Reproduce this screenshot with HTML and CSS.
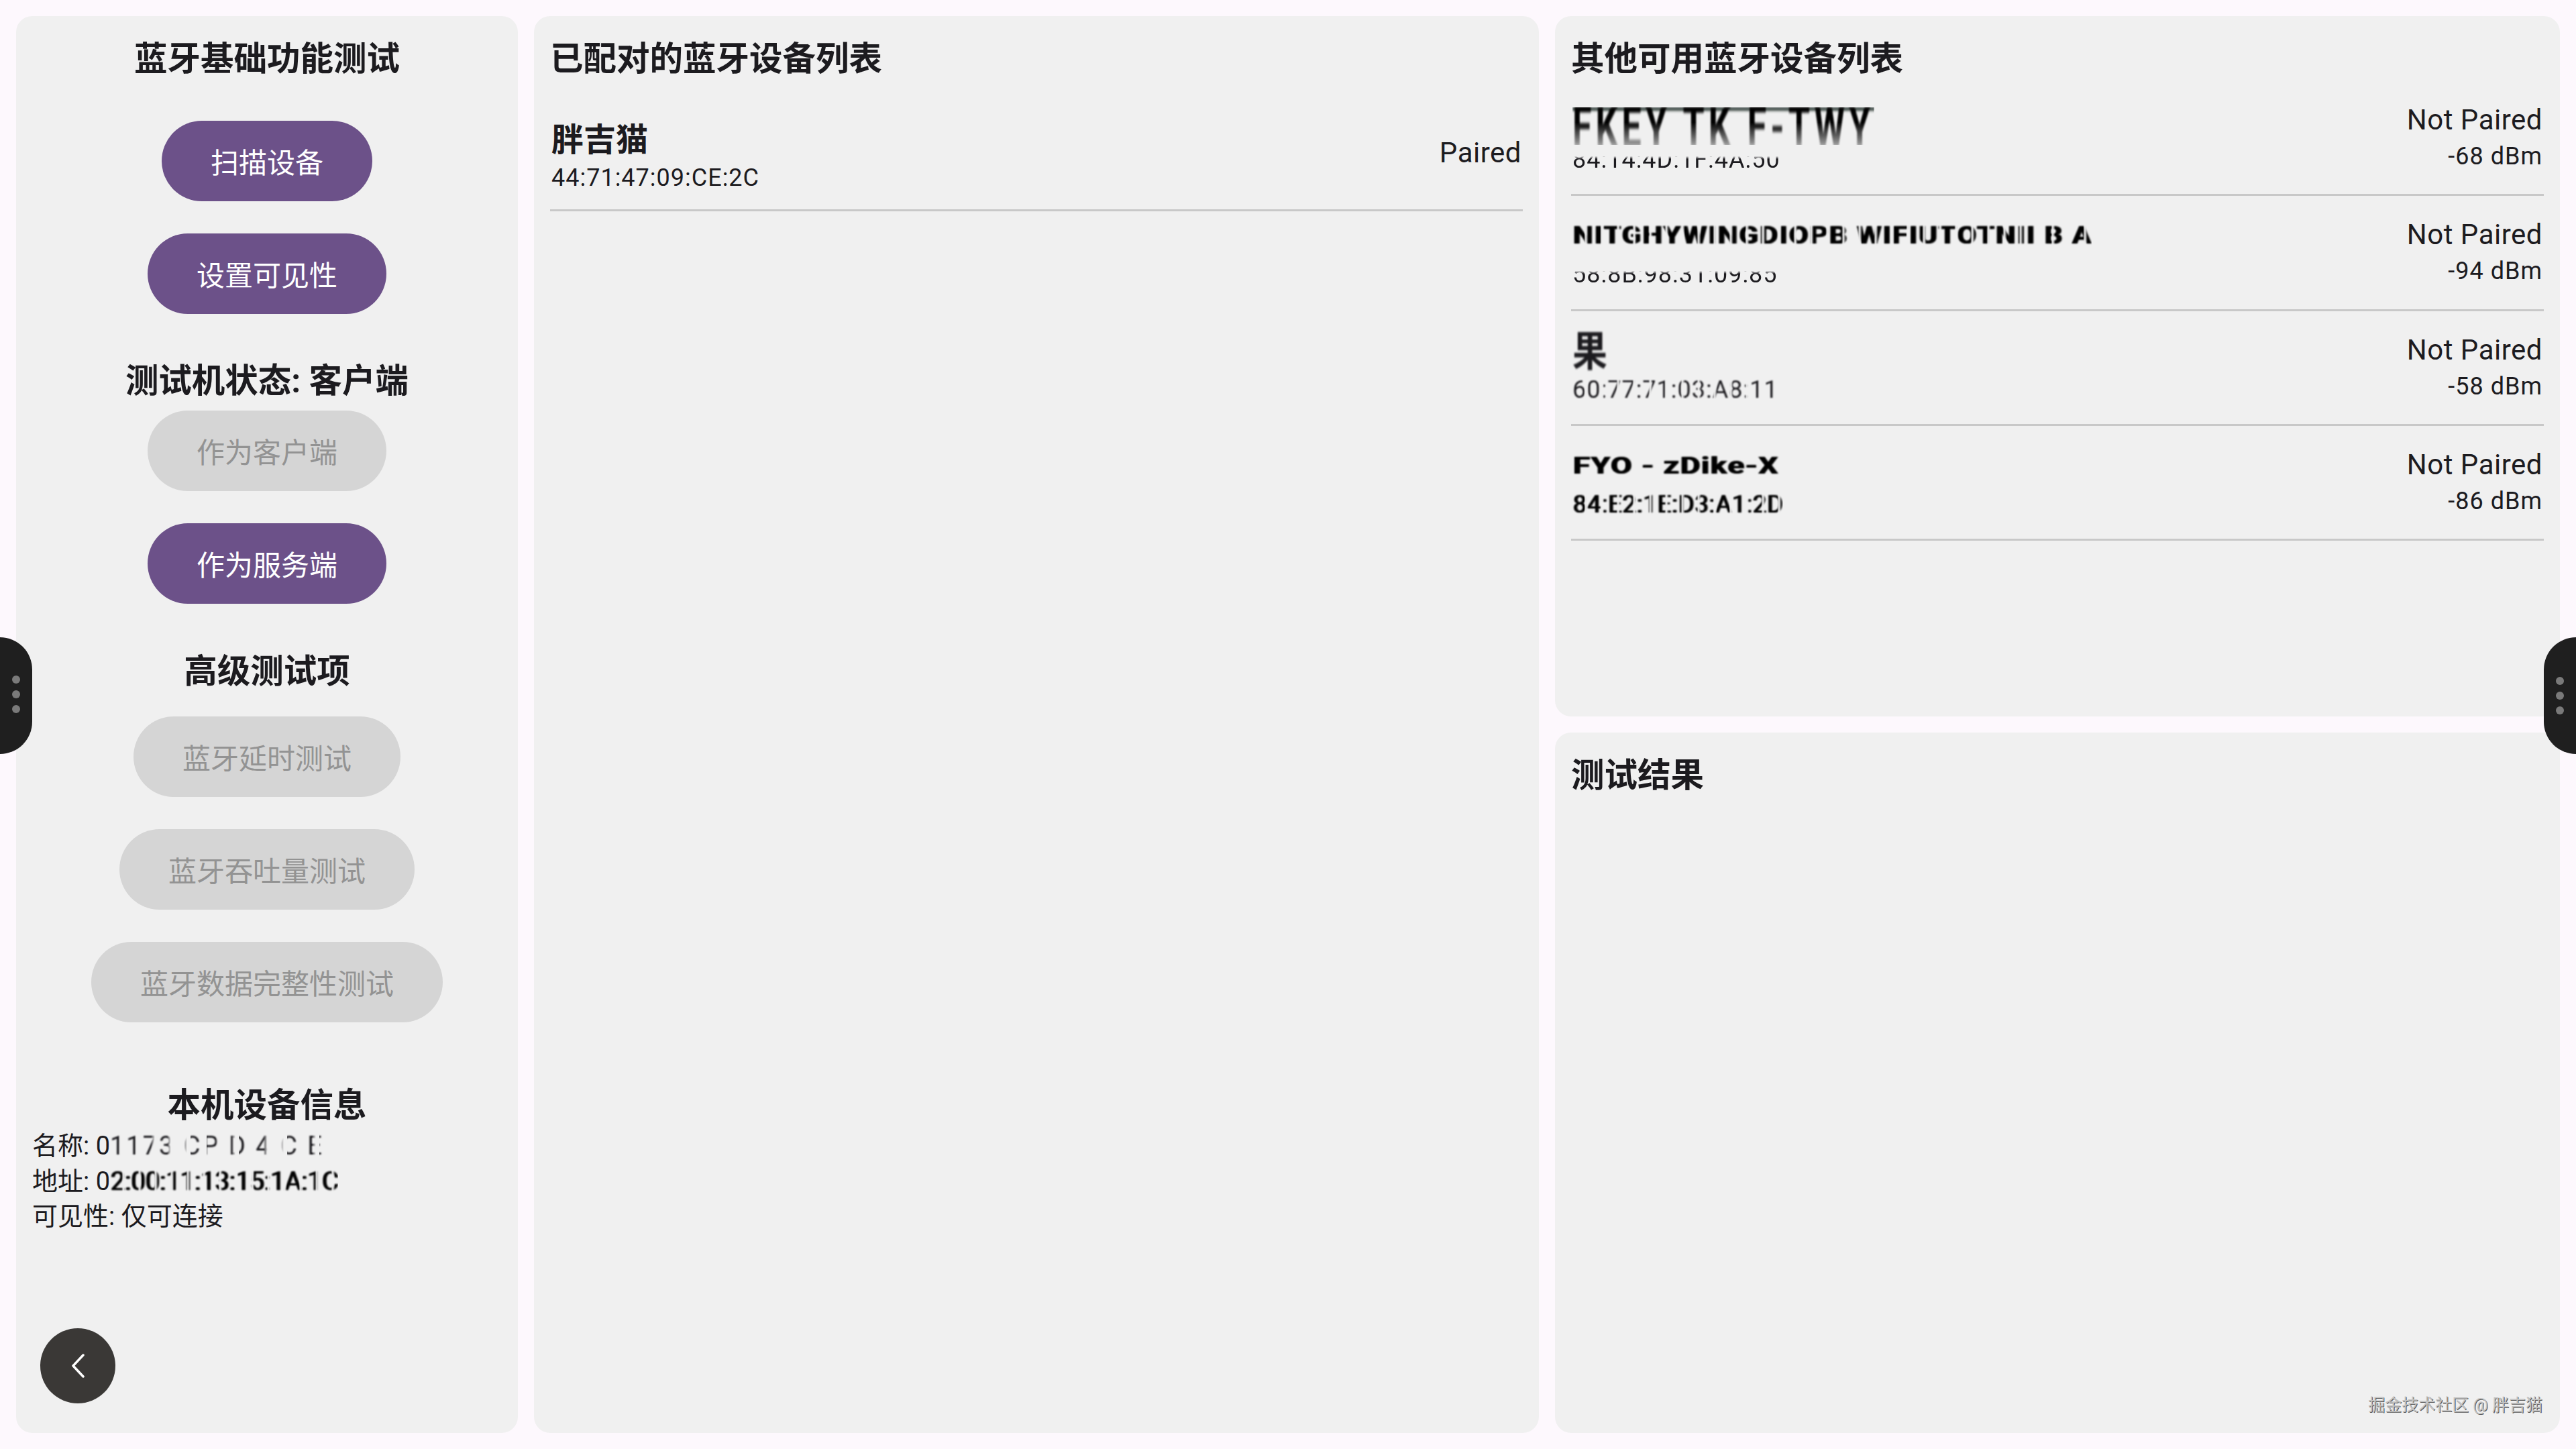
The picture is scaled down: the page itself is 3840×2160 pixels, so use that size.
FILE: index.html
```html
<!DOCTYPE html>
<html lang="zh-CN">
<head>
  <meta charset="UTF-8">
  <title>蓝牙测试</title>
  <link rel="stylesheet" href="styles.css">
</head>
<body>
  <div class="MainFrame">
    <div class="card sideCard">
      <h2 class="title">蓝牙基础功能测试</h2>
      <button class="btn first">扫描设备</button>
      <button class="btn">设置可见性</button>
      <h2 class="title stateTitle">测试机状态: 客户端</h2>
      <button class="btn off tight">作为客户端</button>
      <button class="btn">作为服务端</button>
      <h2 class="title advTitle">高级测试项</h2>
      <button class="btn off advFirst">蓝牙延时测试</button>
      <button class="btn off">蓝牙吞吐量测试</button>
      <button class="btn off">蓝牙数据完整性测试</button>
      <h2 class="title infoTitle">本机设备信息</h2>
      <div class="info">
        <p>名称: 0<span class="smudge gaps wide">1173 CP D 4 C E</span></p>
        <p>地址: 0<span class="smudge tightGaps heavy">2:00:11:13:15:1A:1C</span></p>
        <p>可见性: 仅可连接</p>
      </div>
      <div class="backBtn">
        <svg viewBox="0 0 24 40" width="24" height="40"><path d="M20 4 L5 20 L20 36" fill="none" stroke="#fff" stroke-width="3.5" stroke-linecap="round" stroke-linejoin="round"/></svg>
      </div>
    </div>

    <div class="card midCard">
      <h2 class="title">已配对的蓝牙设备列表</h2>
      <ul class="list pairedList">
        <li class="row">
          <div>
            <div class="name">胖吉猫</div>
            <div class="mac">44:71:47:09:CE:2C</div>
          </div>
          <div class="state">Paired</div>
        </li>
      </ul>
    </div>

    <div class="rightCol">
      <div class="card">
        <h2 class="title">其他可用蓝牙设备列表</h2>
        <ul class="list otherList">
          <li class="row">
            <div>
              <div class="name"><span class="smudge stretch">FKEY TK F-TWY</span></div>
              <div class="mac"><span class="cut">84:14:4D:1F:4A:50</span></div>
            </div>
            <div class="meta"><div class="state">Not Paired</div><div class="rssi">-68 dBm</div></div>
          </li>
          <li class="row">
            <div>
              <div class="name"><span class="smudge long tightGaps heavy">NITGHYWINGDIOPB WIFIUTOTNII B A</span></div>
              <div class="mac"><span class="cut">58:8B:98:31:09:85</span></div>
            </div>
            <div class="meta"><div class="state">Not Paired</div><div class="rssi">-94 dBm</div></div>
          </li>
          <li class="row">
            <div>
              <div class="name"><span class="smudge big">果</span></div>
              <div class="mac"><span class="smudge tightGaps">60:77:71:03:A8:11</span></div>
            </div>
            <div class="meta"><div class="state">Not Paired</div><div class="rssi">-58 dBm</div></div>
          </li>
          <li class="row">
            <div>
              <div class="name"><span class="smudge short heavy">FYO - zDike-X</span></div>
              <div class="mac"><span class="smudge tightGaps heavy">84:E2:1E:D3:A1:2D</span></div>
            </div>
            <div class="meta"><div class="state">Not Paired</div><div class="rssi">-86 dBm</div></div>
          </li>
        </ul>
      </div>
      <div class="card">
        <h2 class="title">测试结果</h2>
      </div>
    </div>
  </div>

  <div class="handle handleLeft"><i></i><i></i><i></i></div>
  <div class="handle handleRight"><i></i><i></i><i></i></div>
  <div class="mark">掘金技术社区 @ 胖吉猫</div>
</body>
</html>
```

FILE: styles.css
```css
* {
  box-sizing: border-box;
}

html, body {
  margin: 0;
  height: 100%;
}

body {
  background-color: #fdf8fd;
  color: #1c1b1f;
  font-family: Roboto, "Noto Sans CJK SC", sans-serif;
  overflow: hidden;
  position: relative;
}

.MainFrame {
  display: flex;
  gap: 24px;
  height: 2160px;
  padding: 24px;
}

.card {
  flex: 1 1 0;
  min-width: 0;
  background-color: #f0f0f0;
  border-radius: 24px;
  padding: 34px 24px 24px;
  position: relative;
}

.sideCard {
  flex: 0 0 748px;
  display: flex;
  flex-direction: column;
  align-items: center;
}

.midCard {
  flex: 0 0 1498px;
}

.rightCol {
  flex: 0 0 1498px;
  display: flex;
  flex-direction: column;
  gap: 24px;
}

.title {
  margin: 0;
  font-size: 49.5px;
  font-weight: 700;
  line-height: 60px;
  color: #1c1b1f;
}

.stateTitle {
  margin-top: 70px;
}

.advTitle {
  margin-top: 71px;
}

.infoTitle {
  margin-top: 94px;
}

.btn {
  display: block;
  flex: none;
  height: 120px;
  margin-top: 48px;
  padding: 8px 73px 0;
  border: none;
  border-radius: 60px;
  background-color: #6c5189;
  color: #fff;
  font-family: inherit;
  font-size: 42px;
  line-height: 1;
}

.btn.first {
  margin-top: 62px;
}

.btn.tight {
  margin-top: 14px;
}

.btn.advFirst {
  margin-top: 37px;
}

.btn.off {
  background-color: #d5d5d5;
  color: #939393;
}

.info {
  align-self: stretch;
  margin-top: 4px;
  font-size: 38px;
  line-height: 52.5px;
}

.info p {
  margin: 0;
}

.list {
  list-style: none;
  margin: 0;
  padding: 0;
}

.pairedList {
  margin-top: 26px;
}

.otherList {
  margin-top: 3px;
}

.row {
  display: flex;
  justify-content: space-between;
  align-items: center;
  height: 171.3px;
  border-bottom: 3px solid #c8c8c8;
  padding: 0 2px;
}

.name {
  font-size: 48px;
  font-weight: 700;
  line-height: 60px;
  height: 60px;
  white-space: nowrap;
}

.mac {
  font-size: 36px;
  line-height: 44px;
  letter-spacing: 1px;
  margin-top: 6px;
  white-space: nowrap;
}

.pairedList .name {
  margin-top: 10px;
}

.pairedList .mac {
  margin-top: 4px;
}

.state {
  font-size: 42px;
  line-height: 56px;
  letter-spacing: 0.5px;
}

.meta {
  text-align: right;
}

.rssi {
  font-size: 36px;
  line-height: 52px;
  letter-spacing: 1px;
}

/* 打码的文字 */
.smudge {
  display: inline-block;
  filter: blur(1.2px);
}

.heavy {
  color: #000;
  text-shadow: 2px 0 1px #000;
}

.wide {
  letter-spacing: 3px;
}

.gaps {
  -webkit-mask-image: repeating-linear-gradient(90deg, #000 0, #000 13px, transparent 19px, transparent 24px);
  mask-image: repeating-linear-gradient(90deg, #000 0, #000 13px, transparent 19px, transparent 24px);
}

.tightGaps {
  -webkit-mask-image: repeating-linear-gradient(90deg, #000 0, #000 17px, transparent 20px, #000 24px);
  mask-image: repeating-linear-gradient(90deg, #000 0, #000 17px, transparent 20px, #000 24px);
}

.smudge.long {
  font-size: 42px;
  letter-spacing: 2px;
  transform: scaleY(0.9);
  transform-origin: left top;
}

.smudge.short {
  font-size: 46px;
  letter-spacing: 1.5px;
  line-height: 40px;
  margin-top: 8px;
  transform: scaleY(0.75);
}

.smudge.stretch {
  font-size: 52px;
  letter-spacing: 6px;
  line-height: 32px;
  margin-top: 8px;
  color: #000;
  border-top: 3px solid #1c2b26;
  transform: scaleY(1.6);
  transform-origin: left top;
  -webkit-mask-image: linear-gradient(180deg, #000 0, #000 40%, rgba(0,0,0,.35) 100%);
  mask-image: linear-gradient(180deg, #000 0, #000 40%, rgba(0,0,0,.35) 100%);
}

.smudge.big {
  font-size: 52px;
  line-height: 40px;
  margin-top: 8px;
  transform: scaleY(1.2);
  transform-origin: left top;
}

.cut {
  display: inline-block;
  filter: blur(0.6px);
  -webkit-mask-image: linear-gradient(180deg, transparent 38%, #000 48%);
  mask-image: linear-gradient(180deg, transparent 38%, #000 48%);
}

.backBtn {
  position: absolute;
  left: 36px;
  bottom: 44px;
  width: 112px;
  height: 112px;
  border-radius: 50%;
  background-color: #3a3836;
  display: flex;
  align-items: center;
  justify-content: center;
}

.handle {
  position: absolute;
  top: 950px;
  width: 48px;
  height: 174px;
  background-color: #1f1f1f;
  display: flex;
  flex-direction: column;
  align-items: center;
  justify-content: center;
  gap: 10px;
}

.handle i {
  width: 12px;
  height: 12px;
  border-radius: 50%;
  background-color: #7a7a7a;
}

.handleLeft {
  left: 0;
  border-radius: 0 48px 48px 0;
  align-items: flex-end;
  padding: 0 18px 4px 0;
}

.handleRight {
  right: 0;
  border-radius: 48px 0 0 48px;
  align-items: flex-start;
  padding: 0 0 0 18px;
}

.mark {
  position: absolute;
  right: 50px;
  bottom: 50px;
  font-size: 25px;
  line-height: 30px;
  color: #c4c4c4;
  text-shadow: 1px 1px 0 #555;
}
```
